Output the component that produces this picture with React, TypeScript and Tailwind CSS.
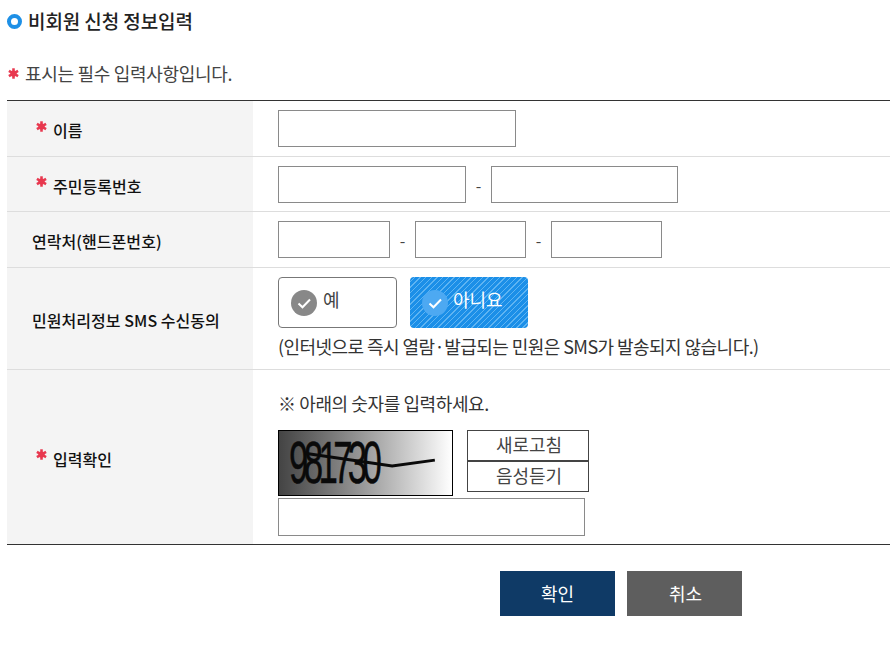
import React from 'react';

const font = { fontFamily: '"Noto Sans CJK KR", "Liberation Sans", sans-serif' };

const Star = ({ className = '' }: { className?: string }) => (
  <svg viewBox="0 0 12 12" className={`w-[11px] h-[11px] shrink-0 ${className}`}>
    <circle cx="6" cy="6" r="3.4" fill="#e8384f" />
    <g stroke="#e8384f" strokeWidth="2.8">
      <line x1="6" y1="0.3" x2="6" y2="11.7" />
      <line x1="1" y1="3.1" x2="11" y2="8.9" />
      <line x1="1" y1="8.9" x2="11" y2="3.1" />
    </g>
  </svg>
);

const Field = ({ w }: { w: string }) => (
  <input type="text" className={`${w} h-[37px] border border-[#8a8a8a] bg-white`} />
);

const Dash = () => <span className="w-[25px] text-center text-[#444] text-[16px]">-</span>;

const Row = ({
  label,
  required,
  className,
  children,
}: {
  label: string;
  required?: boolean;
  className: string;
  children: React.ReactNode;
}) => (
  <div className={`flex border-b ${className}`}>
    <div className="w-[246px] shrink-0 bg-[#f4f4f4] flex items-center pl-[25px] text-[16px] font-medium text-[#111]">
      {required && <Star className="ml-[4px] mr-[6px] -mt-[5px]" />}
      <span className="pt-[3px] tracking-[0.05px]">{label}</span>
    </div>
    <div className="flex-1 pl-[25px]">{children}</div>
  </div>
);

const Check = ({ bg }: { bg: string }) => (
  <svg viewBox="0 0 26 26" className="w-[26px] h-[26px] shrink-0">
    <circle cx="13" cy="13" r="13" fill={bg} />
    <path d="M7.5 13.5l4 3.8L19 9.5" fill="none" stroke="#fff" strokeWidth="2" />
  </svg>
);

export default function App() {
  return (
    <div className="w-[890px] h-[657px] bg-white overflow-hidden" style={font}>
      <div className="flex items-center h-[42px] pl-[7px]">
        <span className="w-[15px] h-[15px] rounded-full border-[4px] border-[#1e90e6] bg-white" />
        <h2 className="ml-[6px] text-[19px] font-medium text-[#222] tracking-[-0.1px]">비회원 신청 정보입력</h2>
      </div>

      <div className="flex items-center h-[32px] mt-[15px] pl-[8px]">
        <Star />
        <p className="ml-[6px] text-[18px] text-[#444] tracking-[-0.3px]">표시는 필수 입력사항입니다.</p>
      </div>

      <div className="ml-[7px] mt-[11px] border-t border-[#333]">
        <Row label="이름" required className="h-[56px] border-[#dddddd]">
          <div className="pt-[9px]"><Field w="w-[238px]" /></div>
        </Row>
        <Row label="주민등록번호" required className="h-[55px] border-[#dddddd]">
          <div className="pt-[9px] flex items-center">
            <Field w="w-[188px]" />
            <Dash />
            <Field w="w-[187px]" />
          </div>
        </Row>
        <Row label="연락처(핸드폰번호)" className="h-[56px] border-[#dddddd]">
          <div className="pt-[9px] flex items-center">
            <Field w="w-[112px]" />
            <Dash />
            <Field w="w-[111px]" />
            <Dash />
            <Field w="w-[111px]" />
          </div>
        </Row>
        <Row label="민원처리정보 SMS 수신동의" className="h-[102px] border-[#dddddd]">
          <div className="pt-[9px]">
            <div className="flex gap-[13px]">
              <div className="w-[119px] h-[51px] border border-[#777] rounded-[4px] flex items-center pl-[12px] text-[18px] text-[#444]">
                <Check bg="#888888" />
                <span className="ml-[6px] -mt-[7px]">예</span>
              </div>
              <div className="w-[118px] h-[51px] rounded-[4px] flex items-center pl-[12px] text-[18px] text-white bg-[repeating-linear-gradient(135deg,#1b8fe8_0px,#1b8fe8_3px,#5fb4f2_3px,#5fb4f2_4px)]">
                <Check bg="#4da9f2" />
                <span className="ml-[5px] -mt-[7px]">아니요</span>
              </div>
            </div>
            <p className="mt-[4px] text-[18px] leading-[28px] text-[#333] tracking-[-0.55px]">
              (인터넷으로 즉시 열람·발급되는 민원은 SMS가 발송되지 않습니다.)
            </p>
          </div>
        </Row>
        <Row label="입력확인" required className="h-[175px] border-[#333]">
          <div className="pt-[20px]">
            <p className="text-[18px] leading-[26px] text-[#333] tracking-[-0.4px]">※ 아래의 숫자를 입력하세요.</p>
            <div className="flex mt-[14px]">
              <div className="relative w-[175px] h-[66px] border border-black bg-linear-to-r from-[#444] to-white overflow-hidden">
                <span
                  className="absolute left-[10px] top-[-3px] text-[60px] leading-[70px] text-[#0a0a0a] tracking-[-8px] scale-x-[0.58] origin-left [-webkit-text-stroke:0.5px_#0a0a0a]"
                  style={{ fontFamily: '"Liberation Sans", sans-serif' }}
                >
                  981730
                </span>
                <svg viewBox="0 0 175 66" className="absolute inset-0 w-full h-full">
                  <path d="M25 23 L115 36 L159 30" fill="none" stroke="#0a0a0a" strokeWidth="3" />
                </svg>
              </div>
              <div className="ml-[14px] w-[122px] pl-[0px] text-[18px] text-[#444] text-center">
                <div className="h-[31px] border border-[#444] pl-[2px] leading-[27px]">새로고침</div>
                <div className="h-[31px] border border-[#444] pl-[2px] leading-[27px]">음성듣기</div>
              </div>
            </div>
            <input type="text" className="block mt-[2px] w-[307px] h-[38px] border border-[#8a8a8a]" />
          </div>
        </Row>
      </div>

      <div className="flex mt-[26px] ml-[500px] gap-[12px] text-[18px] text-white">
        <button className="w-[115px] h-[45px] bg-[#0f3a66]">확인</button>
        <button className="w-[115px] h-[45px] pl-[2px] bg-[#5e5e5e]">취소</button>
      </div>
    </div>
  );
}
